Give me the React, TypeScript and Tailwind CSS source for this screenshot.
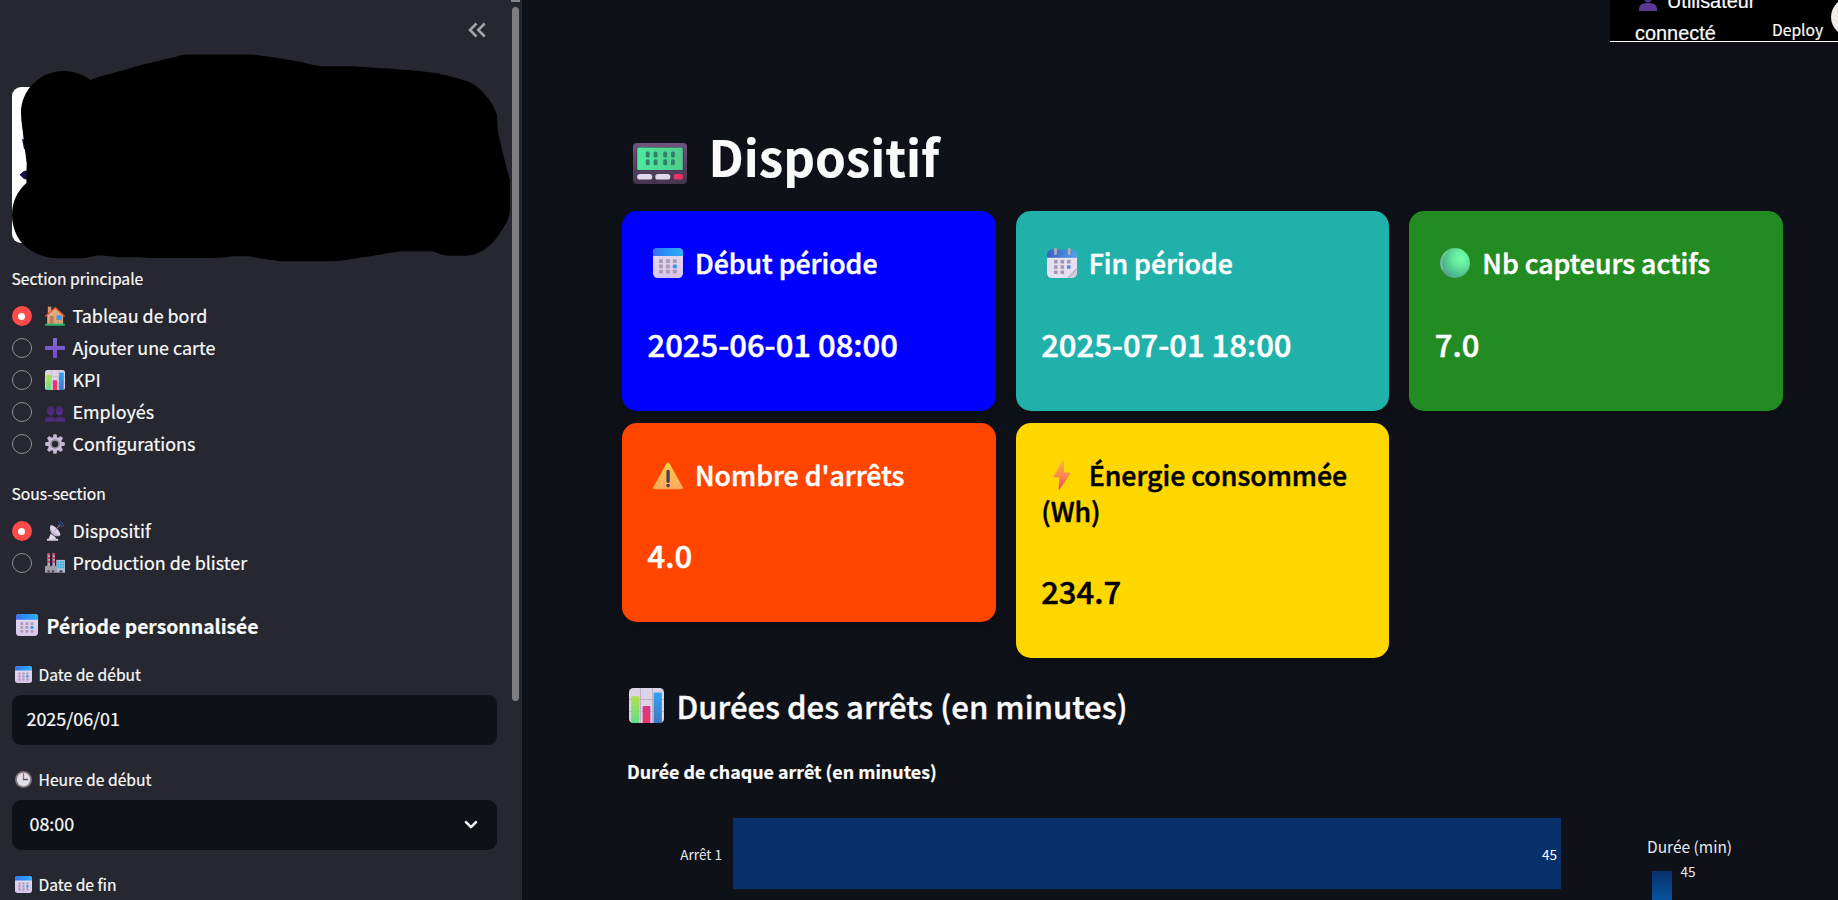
import React from "react";

type IconProps = { className?: string };

const Svg = ({ className = "", children }: IconProps & { children: React.ReactNode }) => (
  <svg viewBox="0 0 32 32" className={`shrink-0 ${className}`} aria-hidden="true">
    {children}
  </svg>
);

/* ---------- Icons ---------- */

const CalendarGrid = ({ y = 13 }: { y?: number }) => (
  <>
    {[0, 1, 2].map((r) =>
      [0, 1, 2].map((c) => (
        <rect
          key={`${r}${c}`}
          x={6.4 + c * 7.4}
          y={y + r * 5.6}
          width="4.2"
          height="4"
          rx="0.5"
          fill={r === 1 && c === 2 ? "#3a95e8" : "#a89bb8"}
        />
      ))
    )}
  </>
);

const Calendar = ({ className }: IconProps) => (
  <Svg className={className}>
    <defs>
      <linearGradient id="cal-top" x1="0" y1="0" x2="1" y2="0">
        <stop offset="0" stopColor="#3d6cf0" />
        <stop offset="0.25" stopColor="#2b86f5" />
        <stop offset="1" stopColor="#2fb0fb" />
      </linearGradient>
      <linearGradient id="cal-body" x1="0" y1="0" x2="0" y2="1">
        <stop offset="0" stopColor="#e6dcf0" />
        <stop offset="1" stopColor="#d9c5ec" />
      </linearGradient>
    </defs>
    <rect width="32" height="32" rx="5" fill="url(#cal-body)" />
    <path d="M0 8.5V5a5 5 0 0 1 5-5h22a5 5 0 0 1 5 5v3.5z" fill="url(#cal-top)" />
    <CalendarGrid y={12} />
  </Svg>
);

const SpiralCalendar = ({ className }: IconProps) => (
  <Svg className={className}>
    <defs>
      <linearGradient id="sp-top" x1="0" y1="0" x2="1" y2="0">
        <stop offset="0" stopColor="#3b5dc4" />
        <stop offset="1" stopColor="#4aa3e6" />
      </linearGradient>
    </defs>
    <path d="M0 9h32v12.500L22.500 32H5a5 5 0 0 1-5-5z" fill="#e6dff0" />
    <path d="M32 21.500V27a5 5 0 0 1-5 5h-4.500z" fill="#d5cae2" />
    <path d="M22.500 31.800 31.800 21.700" stroke="#a99bb9" strokeWidth="0.8" />
    <path d="M0 10.500V7a5.500 5.500 0 0 1 5.500-5.500h21A5.500 5.500 0 0 1 32 7v3.500z" fill="url(#sp-top)" />
    {[0, 1, 2].map((r) =>
      [0, 1, 2].map((c) =>
        r === 2 && c === 2 ? null : (
          <rect
            key={`${r}${c}`}
            x={7.5 + c * 6.9}
            y={12.8 + r * 5.6}
            width="3.8"
            height="3.8"
            rx="0.4"
            fill={r === 1 && c === 2 ? "#3f8ce0" : "#a096ae"}
          />
        )
      )
    )}
    <rect x="7.6" y="0" width="3" height="7.5" rx="1.5" fill="#b4a9b6" />
    <rect x="22.2" y="0" width="3" height="7.5" rx="1.5" fill="#b4a9b6" />
  </Svg>
);

const BarChartEmoji = ({ className }: IconProps) => (
  <Svg className={className}>
    <defs>
      <linearGradient id="bc-g" x1="0" y1="0" x2="0" y2="1">
        <stop offset="0" stopColor="#b3e04e" />
        <stop offset="1" stopColor="#5fdd8c" />
      </linearGradient>
      <linearGradient id="bc-b" x1="0" y1="0" x2="0" y2="1">
        <stop offset="0" stopColor="#30a4f4" />
        <stop offset="1" stopColor="#3c78c8" />
      </linearGradient>
      <linearGradient id="bc-r" x1="0" y1="0" x2="0" y2="1">
        <stop offset="0" stopColor="#dc3590" />
        <stop offset="1" stopColor="#e83562" />
      </linearGradient>
    </defs>
    <rect width="32" height="32" rx="4" fill="#dcd4e4" />
    <path d="M0 10.500h32M0 21.500h32M10.500 0v32M21.500 0v32" stroke="#bdb2c8" strokeWidth="0.9" />
    <path d="M2 32V8.500a1 1 0 0 1 1-1h5.500a1 1 0 0 1 1 1V32z" fill="url(#bc-g)" />
    <path d="M12.500 32V17.500a1 1 0 0 1 1-1H18.500a1 1 0 0 1 1 1V32z" fill="url(#bc-r)" />
    <path d="M22.500 32V5a1 1 0 0 1 1-1H29a1 1 0 0 1 1 1v27z" fill="url(#bc-b)" />
  </Svg>
);

const House = ({ className }: IconProps) => (
  <Svg className={className}>
    <defs>
      <linearGradient id="h-wall" x1="0" y1="0" x2="1" y2="1">
        <stop offset="0" stopColor="#e8b388" />
        <stop offset="1" stopColor="#d09c78" />
      </linearGradient>
    </defs>
    <rect x="4.5" y="1" width="5.5" height="12" fill="#d3966a" />
    <path d="M3.500 14 17 2.500 29 14v15H3.500z" fill="url(#h-wall)" />
    <rect x="7.5" y="16" width="6.5" height="13" rx="0.6" fill="#bd7d55" />
    <rect x="19" y="15.5" width="7" height="6.5" fill="#2d9ff0" stroke="#7c7fae" strokeWidth="0.7" />
    <path d="M1.200 16 16.500 2.800 30.800 16" fill="none" stroke="#f0512d" strokeWidth="2.2" strokeLinecap="round" strokeLinejoin="round" />
    <rect x="0" y="28.5" width="32" height="3" rx="1" fill="#27b566" />
  </Svg>
);

const Plus = ({ className }: IconProps) => (
  <Svg className={className}>
    <defs>
      <linearGradient id="pl" x1="0" y1="0" x2="0" y2="1">
        <stop offset="0" stopColor="#7f6fc4" />
        <stop offset="1" stopColor="#7a45d8" />
      </linearGradient>
    </defs>
    <path
      d="M12.800 1.500a1.500 1.500 0 0 1 1.500-1.500h3.400a1.500 1.500 0 0 1 1.500 1.500v11.300h11.300a1.500 1.500 0 0 1 1.500 1.500v3.400a1.500 1.500 0 0 1-1.500 1.500H19.200v11.300a1.500 1.500 0 0 1-1.500 1.500h-3.400a1.500 1.500 0 0 1-1.500-1.500V19.200H1.500A1.500 1.500 0 0 1 0 17.700v-3.400a1.500 1.500 0 0 1 1.500-1.500h11.300z"
      fill="url(#pl)"
    />
  </Svg>
);

const People = ({ className }: IconProps) => (
  <Svg className={className}>
    <defs>
      <linearGradient id="pp" x1="0" y1="0" x2="0" y2="1">
        <stop offset="0" stopColor="#442669" />
        <stop offset="1" stopColor="#54308c" />
      </linearGradient>
    </defs>
    <ellipse cx="9" cy="14" rx="6" ry="7.5" fill="url(#pp)" />
    <ellipse cx="23" cy="14" rx="6" ry="7.5" fill="url(#pp)" />
    <path d="M0 31v-2.500C0 25 3 23.500 8.500 23.500s7.200 1.500 7.200 5V31zM16.300 31v-2.500c0-3.500 1.700-5 7.200-5s8.500 1.500 8.500 5V31z" fill="url(#pp)" />
  </Svg>
);

const Gear = ({ className }: IconProps) => (
  <Svg className={className}>
    {[0, 45, 90, 135, 180, 225, 270, 315].map((a) => (
      <path key={a} d="M12.500 6 13.300 1.300a1.200 1.200 0 0 1 1.200-1h3a1.200 1.200 0 0 1 1.200 1L19.500 6z" fill="#c4b6d8" transform={`rotate(${a} 16 16)`} />
    ))}
    <circle cx="16" cy="16" r="8.7" fill="none" stroke="#cabddc" strokeWidth="5" />
    <circle cx="16" cy="16" r="6.3" fill="none" stroke="#8e8797" strokeWidth="2.6" />
  </Svg>
);

const Satellite = ({ className }: IconProps) => (
  <Svg className={className}>
    <path d="M5 30.500 9 20.500l7.500 5 1.500 5z" fill="#e3dbea" />
    <rect x="3" y="28.5" width="18" height="3.2" rx="1" fill="#d5cbe0" />
    <path d="M9 7C5.500 13 10 23.500 19 24.500c2.500.3 4.500-.3 5.500-2z" fill="#bcb0cc" />
    <path d="M9 7c5-1.500 16.500 10 15.500 15.500C19 24 6.500 14 9 7z" fill="#ddd4e6" />
    <path d="m15 16 7.500-8" stroke="#9c92aa" strokeWidth="1.6" />
    <circle cx="22.500" cy="8" r="1.5" fill="#7d7390" />
    <path d="M21.500 4.500c3.500 0 5 2 5 5.500M21.500 1c5.500 0 8 3 8 8" fill="none" stroke="#2d5bbd" strokeWidth="1.6" />
  </Svg>
);

const Factory = ({ className }: IconProps) => (
  <Svg className={className}>
    {[4, 12].map((x) => (
      <g key={x}>
        <rect x={x} y="0.5" width="4" height="21" fill="#b9a7bd" />
        <path d={`M${x} 0.500h4v3h-4zM${x} 6.500h4v3h-4zM${x} 12.500h4v3h-4z`} fill="#d93a66" />
      </g>
    ))}
    <path d="M0 31.500V21.500l3-1.500h3.500l2 1.500 2.500-1.500H15l3 1.500v10z" fill="#a59bab" />
    <rect x="18" y="11" width="14" height="20.5" fill="#a9bccb" />
    {[13.5, 17.5, 21.5].map((y) =>
      [20, 24, 28].map((x) => <rect key={`${x}${y}`} x={x} y={y} width="2.7" height="2.7" fill="#23abef" />)
    )}
    <path d="M4 27.500h3.500v4H4zM11 27.500h3.500v4H11zM23 27.500h5v4h-5z" fill="#594a66" />
  </Svg>
);

const Clock = ({ className }: IconProps) => (
  <Svg className={className}>
    <circle cx="16" cy="16" r="16" fill="#7d787c" />
    <circle cx="16" cy="16" r="12.5" fill="#e2dde6" />
    <path d="M16 16V5.500" stroke="#ee3d62" strokeWidth="2.2" strokeLinecap="round" />
    <path d="M16 16h7.500" stroke="#5b4f68" strokeWidth="2.4" strokeLinecap="round" />
  </Svg>
);

const Pager = ({ className }: IconProps) => (
  <svg viewBox="0 0 54 41" className={`shrink-0 ${className ?? ""}`} aria-hidden="true">
    <defs>
      <linearGradient id="pg-s" x1="0" y1="0" x2="1" y2="0">
        <stop offset="0" stopColor="#4fe89c" />
        <stop offset="1" stopColor="#50cc8c" />
      </linearGradient>
      <linearGradient id="pg-b" x1="0" y1="0" x2="0" y2="1">
        <stop offset="0" stopColor="#6f5480" />
        <stop offset="1" stopColor="#46334f" />
      </linearGradient>
    </defs>
    <rect width="54" height="41" rx="4" fill="url(#pg-b)" />
    <rect x="3.5" y="4" width="47" height="23.5" rx="1" fill="#40334a" />
    <rect x="4.2" y="4.5" width="45.6" height="22.5" rx="1" fill="url(#pg-s)" />
    {[12.8, 20.6, 30.2, 38].map((x) => (
      <g key={x} fill="#347f6b">
        <rect x={x} y="8.6" width="3.9" height="6" rx="1.6" />
        <rect x={x} y="16.3" width="3.9" height="6" rx="1.6" />
      </g>
    ))}
    <rect x="4.2" y="31" width="15" height="5.6" rx="2.6" fill="#e0d6ea" />
    <rect x="22.3" y="31" width="15" height="5.6" rx="2.6" fill="#e0d6ea" />
    <rect x="40.6" y="31" width="9.4" height="5.6" rx="2.6" fill="#ee3560" />
  </svg>
);

const GreenBall = ({ className }: IconProps) => (
  <Svg className={className}>
    <defs>
      <radialGradient id="gb" cx="0.7" cy="0.35" r="0.75">
        <stop offset="0" stopColor="#73ffa8" />
        <stop offset="0.35" stopColor="#65ea9e" />
        <stop offset="0.8" stopColor="#4bb88a" />
        <stop offset="1" stopColor="#5b9a9c" />
      </radialGradient>
    </defs>
    <circle cx="16" cy="16" r="16" fill="url(#gb)" />
    <path d="M3 23A15 15 0 0 1 8 3.500" fill="none" stroke="#a4d3b4" strokeOpacity="0.45" strokeWidth="1.8" />
  </Svg>
);

const Warning = ({ className }: IconProps) => (
  <Svg className={className}>
    <defs>
      <linearGradient id="wa" x1="0" y1="0" x2="0" y2="1">
        <stop offset="0" stopColor="#fccf4c" />
        <stop offset="1" stopColor="#fda75c" />
      </linearGradient>
    </defs>
    <path d="M14.300 3.600a2 2 0 0 1 3.400 0L31.700 29a1.500 1.500 0 0 1-1.300 2.200H1.600A1.500 1.500 0 0 1 .3 29z" fill="url(#wa)" />
    <rect x="14.3" y="10.5" width="3.6" height="14" rx="1.8" fill="#4b3f55" />
    <circle cx="16.1" cy="27.3" r="1.9" fill="#4b3f55" />
  </Svg>
);

const Bolt = ({ className }: IconProps) => (
  <Svg className={className}>
    <defs>
      <linearGradient id="bo" x1="0" y1="0" x2="0" y2="1">
        <stop offset="0" stopColor="#f9b347" />
        <stop offset="0.5" stopColor="#fb8a51" />
        <stop offset="1" stopColor="#f2415f" />
      </linearGradient>
    </defs>
    <path d="M16.400.6 7.200 17.200a.8.8 0 0 0 .7 1.200h5.600l-1.200 12.400c-.1.900.9 1.200 1.300.5L24.800 14.600a.8.800 0 0 0-.7-1.200h-6l.1-12.300c0-.9-1.300-1.300-1.800-.5z" fill="url(#bo)" />
  </Svg>
);

/* ---------- Sidebar ---------- */

const Radio = ({ icon, label, checked }: { icon: React.ReactNode; label: string; checked?: boolean }) => (
  <div className="flex h-8 items-center">
    {checked ? (
      <span className="flex h-5 w-5 items-center justify-center rounded-full bg-[#ff4b4b]">
        <span className="h-[7px] w-[7px] rounded-full bg-[#fafafa]" />
      </span>
    ) : (
      <span className="h-5 w-5 rounded-full border border-[#8c8c93] bg-[#262730]" />
    )}
    <span className="ml-[13px] flex h-5 w-5">{icon}</span>
    <span className="ml-[8px] pb-[3px] text-[17.9px] leading-[30px]">{label}</span>
  </div>
);

const Label = ({ children, icon }: { children: React.ReactNode; icon?: React.ReactNode }) => (
  <div className="flex h-6 items-center text-[15.65px] leading-6">
    {icon && <span className="mr-[7px] ml-[3px] flex h-[17px] w-[17px]">{icon}</span>}
    <span className="pt-[1px]">{children}</span>
  </div>
);

const Sidebar = () => (
  <aside className="relative flex h-full w-[522px] shrink-0 bg-[#262730]">
    <div className="flex w-[497px] shrink-0 flex-col pl-[11.5px]">
      <div className="flex h-[87px] shrink-0 justify-end pt-[22px] pr-[11px]">
        <svg viewBox="0 0 18 16" className="h-[16px] w-[18px]" fill="none" stroke="#a3a3a8" strokeWidth="2.6">
          <path d="M8.500 1.500 2 8l6.500 6.500M16.700 1.500 10.200 8l6.500 6.500" />
        </svg>
      </div>
      <div className="h-[156px] w-[440px] shrink-0 rounded-[9px] bg-white" />
      <div className="mt-[23px]">
        <Label>Section principale</Label>
      </div>
      <div className="mt-[10px] flex flex-col">
        <Radio checked icon={<House />} label="Tableau de bord" />
        <Radio icon={<Plus />} label="Ajouter une carte" />
        <Radio icon={<BarChartEmoji />} label="KPI" />
        <Radio icon={<People />} label="Employés" />
        <Radio icon={<Gear />} label="Configurations" />
      </div>
      <div className="mt-[21px]">
        <Label>Sous-section</Label>
      </div>
      <div className="mt-[10px] flex flex-col">
        <Radio checked icon={<Satellite />} label="Dispositif" />
        <Radio icon={<Factory />} label="Production de blister" />
      </div>
      <h3 className="mt-[31px] flex h-[30px] items-center text-[19.35px] leading-[30px] font-bold">
        <Calendar className="mr-[9px] ml-[4px] h-[22px] w-[22px]" />
        <span className="pt-[1px]">Période personnalisée</span>
      </h3>
      <div className="mt-[22px]">
        <Label icon={<Calendar />}>Date de début</Label>
      </div>
      <div className="mt-[9px] flex h-[50px] shrink-0 items-center rounded-[9px] bg-[#0e1117] pb-[3px] pl-[15px] text-[17.9px] leading-[47px]">
        2025/06/01
      </div>
      <div className="mt-[22px]">
        <Label icon={<Clock />}>Heure de début</Label>
      </div>
      <div className="mt-[9px] flex h-[50px] shrink-0 items-center justify-between rounded-[9px] bg-[#0e1117] pr-[19px] pl-[18px] text-[17.9px] leading-[47px]">
        <span className="pb-[3px]">08:00</span>
        <svg viewBox="0 0 14 10" className="h-[10px] w-[14px]" fill="none" stroke="#fafafa" strokeWidth="2.6" strokeLinecap="round" strokeLinejoin="round">
          <path d="M2 2.200 7 7.200l5-5" />
        </svg>
      </div>
      <div className="mt-[22px]">
        <Label icon={<Calendar />}>Date de fin</Label>
      </div>
    </div>
    <div className="ml-[14px] flex w-[9px] flex-col items-center">
      <div className="h-[2px] w-[9px] shrink-0 bg-[#85858c]" />
      <div className="mt-[5px] h-[694px] w-[7px] shrink-0 rounded-full bg-[#7e7d82]" />
    </div>
    <svg viewBox="0 0 522 270" className="absolute top-0 left-0 h-[270px] w-[522px]" aria-hidden="true">
      <path d="M19.500 174.700 24 171l5-1v10l-5-1zM22 139l5 1v10l-3-1z" fill="#14124e" />
      <path d="M21 113C21 90 40 71 64 71c10 0 20 4 26.600 9 8-4 28-8 44.400-13.300 14-4 28-7 41-10 4-1.300 7-2.200 10-2.200h64c14 1 28 4 41 5.800 10 1.500 20 4.500 30 6h30c20 1.500 50 2.500 85 6.700 11 2 20 5 30.500 8 9 3.500 14 8 20.500 16 7 8 10 18 10 18l.6 15 4.400 20c3 11 5 20 8 30v30c-1 10-5 16-10 23-6 9-12 15-20 19-6 3-10 3.700-15 3.700h-17c-6-.6-10-2.500-15.300-4.400H402c-10 1-20 3-30 4.700-14 1.500-28 5-39 5.300h-52.400c-10-1.500-20-2-30.600-5h-17c-10 1.500-20 1.700-30 1.700h-51c-10-1-20-1-34-.7-7-1-14-2-20-2-6 1-12 3-17 3H57.500c-5 0-9-1-13.500-2-9-2.500-16-7-22-13.300-6-7-10-17-10-27.700 0-13 5-24 14.400-32.300l.3-19.700L23.700 140C23 131 21 121 21 113z" fill="#000" />
    </svg>
  </aside>
);

/* ---------- Main ---------- */

type CardProps = { color: string; icon: React.ReactNode; title: string; value: string };

const Card = ({ color, icon, title, value }: CardProps) => (
  <div className={`rounded-[15px] px-[25.5px] pt-[34px] pb-[46px] shadow-[0_4px_10px_rgba(0,0,0,0.2)] ${color}`}>
    <h3 className="text-[26.7px] leading-[36px] font-medium [-webkit-text-stroke:0.5px]">
      <span className="mr-[12px] ml-[5.5px] inline-block h-[30px] w-[30px] align-[-4px] leading-none">{icon}</span>
      {title}
    </h3>
    <p className="mt-[40.500px] text-[31px] leading-[43px] font-medium [-webkit-text-stroke:0.5px]">{value}</p>
  </div>
);

const StopsChart = () => (
  <svg viewBox="0 0 1160 150" className="h-[150px] w-[1160px] shrink-0" fontSize="13.6" fill="#e6eaf1">
    <defs>
      <linearGradient id="scale" x1="0" y1="0" x2="0" y2="1">
        <stop offset="0" stopColor="#08306b" />
        <stop offset="0.35" stopColor="#08519c" />
        <stop offset="1" stopColor="#2171b5" />
      </linearGradient>
    </defs>
    <rect x="111" y="68" width="828" height="71" fill="#08306b" />
    <text x="100" y="109.5" textAnchor="end">Arrêt 1</text>
    <text x="935" y="109.5" textAnchor="end" fill="#fff">45</text>
    <text x="1025" y="102.5" fontSize="15.5">Durée (min)</text>
    <rect x="1030" y="121" width="20" height="80" fill="url(#scale)" />
    <text x="1058.500" y="126.500">45</text>
  </svg>
);

export default function App() {
  return (
    <div className="relative flex h-[900px] w-[1838px] overflow-hidden bg-[#0e1117] font-['Noto_Sans_CJK_SC','Noto_Sans',sans-serif] text-[#fafafa] [-webkit-text-stroke:0.2px]">
      <Sidebar />
      <main className="flex flex-col pl-[100px]">
        <h1 className="mt-[124px] flex h-[60px] shrink-0 items-center pl-[11px] text-[49.4px] leading-[60px] font-bold">
          <Pager className="mt-[18px] mr-[21.5px] h-[41px] w-[54px]" />
          <span className="pt-[3px]">Dispositif</span>
        </h1>
        <div className="mt-[27px] grid w-[1161px] shrink-0 grid-cols-3 items-start gap-x-[20px] gap-y-[12px] text-white">
          <Card color="bg-[#0000ff]" icon={<Calendar />} title="Début période" value="2025-06-01 08:00" />
          <Card color="bg-[#20b2aa]" icon={<SpiralCalendar />} title="Fin période" value="2025-07-01 18:00" />
          <Card color="bg-[#228b22]" icon={<GreenBall />} title="Nb capteurs actifs" value="7.0" />
          <Card color="bg-[#ff4500]" icon={<Warning />} title="Nombre d'arrêts" value="4.0" />
          <Card color="bg-[#ffd700] text-black" icon={<Bolt />} title="Énergie consommée (Wh)" value="234.7" />
        </div>
        <h2 className="mt-[23px] flex h-[48px] shrink-0 items-center pl-[6.500px] text-[31.1px] leading-[48px] font-medium [-webkit-text-stroke:0.4px]">
          <BarChartEmoji className="mr-[13px] h-[35px] w-[35px]" />
          <span className="pt-[1px]">Durées des arrêts (en minutes)</span>
        </h2>
        <div className="mt-[30px] -mb-[33px] h-6 shrink-0 pl-[5px] text-[17.85px] leading-6 font-bold text-white">
          Durée de chaque arrêt (en minutes)
        </div>
        <StopsChart />
      </main>
      <div className="absolute top-0 right-0 flex h-[42px] w-[228px] overflow-hidden border-b border-white bg-black">
        <div className="-mt-[15px] ml-[25px] w-[127px] shrink-0 font-['Liberation_Sans',sans-serif] text-[19.9px] leading-[32px]">
          <svg viewBox="0 0 18 22" className="mr-[10px] ml-[4px] inline-block h-[22px] w-[18px] align-[-3px]" aria-hidden="true">
            <ellipse cx="9" cy="7" rx="5" ry="6.5" fill="#54348c" />
            <path d="M0 22v-2c0-4 3-6 9-6s9 2 9 6v2z" fill="#5a3894" />
          </svg>
          Utilisateur connecté
        </div>
        <div className="ml-[10px] pt-[18px] text-[15.65px] leading-6">Deploy</div>
        <div className="-mt-[2px] ml-[8px] h-[38px] w-[38px] shrink-0 rounded-full bg-[#f0ebe8]" />
      </div>
    </div>
  );
}
